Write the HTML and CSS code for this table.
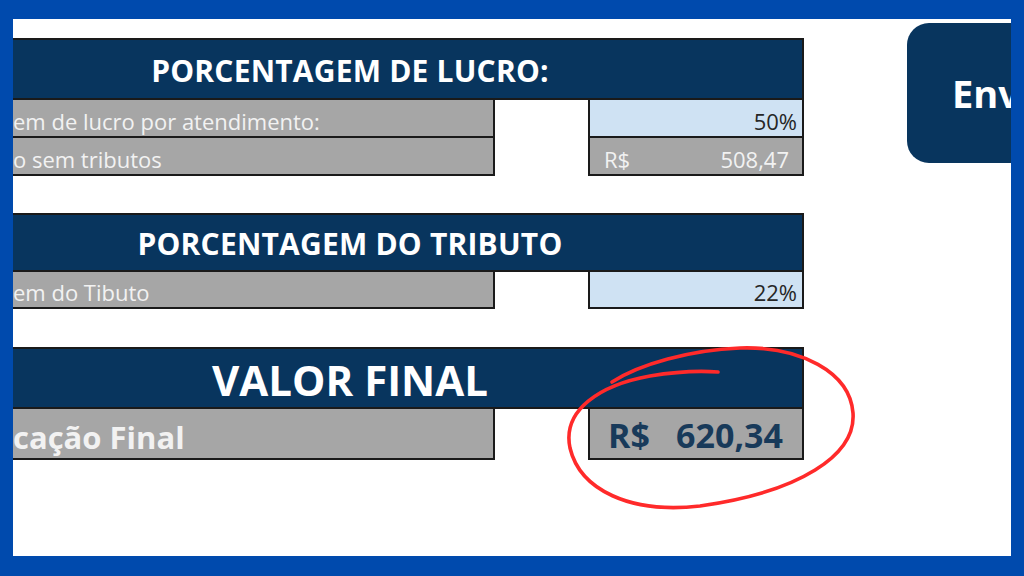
FILE: index.html
```html
<!DOCTYPE html>
<html lang="pt-BR">
<head>
<meta charset="utf-8">
<title>Precificação</title>
<link rel="stylesheet" href="styles.css">
</head>
<body>
<div class="frame">
  <div class="canvas">
    <div class="sheet">
      <section class="block b1">
        <div class="head">PORCENTAGEM DE LUCRO:</div>
        <div class="row">
          <div class="label">em de lucro por atendimento:</div>
          <div class="value input"><span>50%</span></div>
        </div>
        <div class="row">
          <div class="label">o sem tributos</div>
          <div class="value money"><span>R$</span><span>508,47</span></div>
        </div>
      </section>
      <section class="block b2">
        <div class="head">PORCENTAGEM DO TRIBUTO</div>
        <div class="row">
          <div class="label">em do Tibuto</div>
          <div class="value input"><span>22%</span></div>
        </div>
      </section>
      <section class="block b3">
        <div class="head">VALOR FINAL</div>
        <div class="row">
          <div class="label">cação Final</div>
          <div class="value money total"><span>R$</span><span>620,34</span></div>
        </div>
      </section>
    </div>
    <div class="button">Enviar</div>
    <svg class="mark" viewBox="13 19 998 537" width="998" height="537" aria-hidden="true">
      <path d="M612,382 C640,364 690,350 740,348 C800,346 850,372 853,413 C856,455 800,492 700,506 C630,514 580,490 570,448 C562,410 600,385 650,376 C680,371 705,371 718,372" fill="none" stroke="#ff2a2a" stroke-width="3.6" stroke-linecap="round"/>
    </svg>
  </div>
</div>
</body>
</html>
```
FILE: styles.css
```css
html, body {
  margin: 0;
  padding: 0;
}

body {
  background: #004aad;
  font-family: "Open Sans", "Noto Sans", sans-serif;
}

.frame {
  box-sizing: border-box;
  width: 1024px;
  height: 576px;
  padding: 19px 13px 20px 13px;
  background: #004aad;
}

.canvas {
  position: relative;
  height: 537px;
  background: #ffffff;
  overflow: hidden;
  display: flex;
  align-items: flex-start;
}

.sheet {
  flex: 0 0 791px;
  padding-top: 19px;
  display: flex;
  flex-direction: column;
}

.b2 { margin-top: 37px; }
.b3 { margin-top: 38px; }

.head {
  box-sizing: border-box;
  margin-left: -117px;
  height: 62px;
  padding-top: 2px;
  border: 2px solid #1a1a1a;
  background: #08355e;
  color: #ffffff;
  font-weight: 700;
  font-size: 30px;
  letter-spacing: 0.2px;
  display: flex;
  align-items: center;
  justify-content: center;
  white-space: nowrap;
}

.b2 .head { height: 59px; }
.b3 .head { font-size: 42px; letter-spacing: 0; }

.row {
  display: flex;
  justify-content: space-between;
  height: 38px;
}

.b2 .row { height: 37px; }
.b3 .row { height: 51px; }

.label {
  box-sizing: border-box;
  width: 482px;
  border-right: 2px solid #1a1a1a;
  border-bottom: 2px solid #1a1a1a;
  background: #a6a6a6;
  color: #f2f2f2;
  font-size: 22px;
  display: flex;
  align-items: flex-end;
  white-space: nowrap;
}

.b3 .label {
  font-size: 31px;
  font-weight: 700;
}

.value {
  box-sizing: border-box;
  width: 216px;
  border: 2px solid #1a1a1a;
  border-top: 0;
  font-size: 22px;
  display: flex;
  align-items: flex-end;
  white-space: nowrap;
}

.input {
  background: #cfe2f3;
  color: #262626;
  justify-content: flex-end;
  padding-right: 5px;
}

.money {
  background: #a6a6a6;
  color: #f2f2f2;
  justify-content: space-between;
  padding: 0 13px 0 14px;
}

.total {
  color: #183a5a;
  font-size: 34px;
  font-weight: 700;
  padding: 0 19px 0 18px;
}

.button {
  box-sizing: border-box;
  flex: 0 0 260px;
  height: 140px;
  margin-left: 103px;
  margin-top: 4px;
  padding-left: 45px;
  border-radius: 22px;
  background: #08355e;
  color: #ffffff;
  font-weight: 700;
  font-size: 38px;
  display: flex;
  align-items: center;
  white-space: nowrap;
}

.mark {
  position: absolute;
  left: 0;
  top: 0;
  pointer-events: none;
}
```
